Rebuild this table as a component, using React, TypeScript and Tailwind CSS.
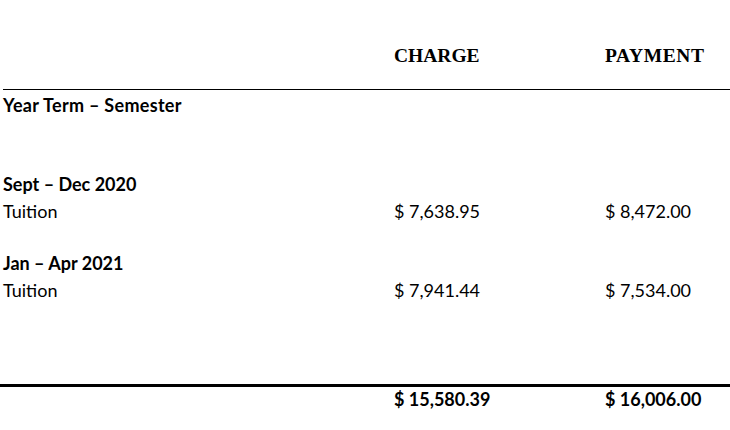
import React from "react";

type TermRow = {
  term: string;
  item: string;
  charge: string;
  payment: string;
};

const TERMS: TermRow[] = [
  { term: "Sept – Dec 2020", item: "Tuition", charge: "$ 7,638.95", payment: "$ 8,472.00" },
  { term: "Jan – Apr 2021", item: "Tuition", charge: "$ 7,941.44", payment: "$ 7,534.00" },
];

const COLS = "grid grid-cols-[394px_211px_1fr]";

function App() {
  return (
    <div className="w-[730px] h-[430px] bg-white text-black overflow-hidden font-['Lato',sans-serif] text-[18px]">
      <div className={`${COLS} h-[89px] pt-[46px] font-['Liberation_Serif',serif] font-bold text-[19.5px] leading-[20px]`}>
        <div></div>
        <div>CHARGE</div>
        <div className="tracking-[0.6px]">PAYMENT</div>
      </div>
      <div className="ml-[3px] h-px bg-black"></div>

      <div className="pl-[3px] pt-[2px] font-bold leading-[27px] tracking-[0.3px]">Year Term – Semester</div>

      <div className="mt-[52px] flex flex-col gap-[25px]">
        {TERMS.map((t) => (
          <div key={t.term} className="leading-[27px]">
            <div className="pl-[3px] font-bold">{t.term}</div>
            <div className={COLS}>
              <div className="pl-[3px]">{t.item}</div>
              <div>{t.charge}</div>
              <div>{t.payment}</div>
            </div>
          </div>
        ))}
      </div>

      <div className="mt-[80px] h-[3px] bg-black"></div>
      <div className={`${COLS} pt-[2px] font-bold leading-[20px]`}>
        <div></div>
        <div>$ 15,580.39</div>
        <div>$ 16,006.00</div>
      </div>
    </div>
  );
}

export default App;
